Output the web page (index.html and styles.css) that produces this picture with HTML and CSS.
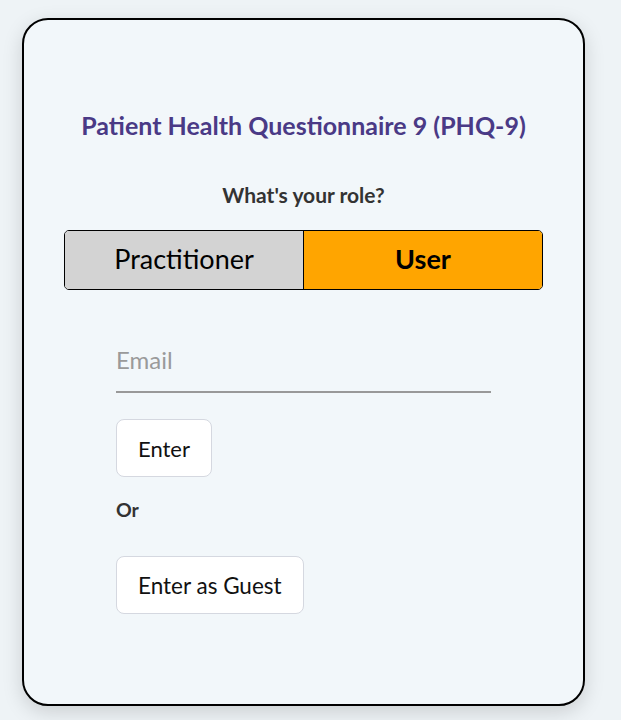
FILE: index.html
```html
<!DOCTYPE html>
<html>
<head>
<meta charset="utf-8">
<link rel="stylesheet" href="styles.css">
</head>
<body>
<div class="card">
  <h1 class="title">Patient Health Questionnaire 9 (PHQ-9)</h1>
  <p class="role">What's your role?</p>
  <div class="toggle">
    <div class="opt opt-off">Practitioner</div>
    <div class="opt opt-on">User</div>
  </div>
  <div class="form">
    <input class="email" type="text" placeholder="Email">
    <button class="btn">Enter</button>
    <p class="or">Or</p>
    <button class="btn btn-guest">Enter as Guest</button>
  </div>
</div>
</body>
</html>
```

FILE: styles.css
```css
html, body {
  margin: 0;
  padding: 0;
}
body {
  background: #eef3f6;
  font-family: Lato, "Open Sans", sans-serif;
  height: 720px;
  overflow: hidden;
}
.card {
  box-sizing: border-box;
  margin: 18px 0 0 22px;
  width: 563px;
  height: 688px;
  border: 2px solid #000;
  border-radius: 26px;
  background: #f2f7fa;
  box-shadow: 0 6px 20px rgba(0, 0, 0, 0.15);
  padding: 0 40px;
}
.title {
  margin: 90px 0 0;
  text-align: center;
  font-size: 25px;
  font-weight: 700;
  color: #4a3a86;
  line-height: 30px;
  white-space: nowrap;
}
.role {
  margin: 42px 0 0;
  text-align: center;
  font-size: 21px;
  font-weight: 700;
  color: #333;
  line-height: 26px;
}
.toggle {
  margin-top: 22px;
  display: flex;
  height: 60px;
  border: 1px solid #000;
  border-radius: 5px;
  overflow: hidden;
  box-sizing: border-box;
}
.opt {
  flex: 1;
  display: flex;
  align-items: center;
  justify-content: center;
  font-size: 27px;
  color: #000;
  padding-bottom: 3px;
}
.opt-off {
  background: #d3d3d3;
  border-right: 1px solid #000;
}
.opt-on {
  background: #ffa500;
  font-weight: 700;
}
.form {
  margin: 40px 0 0 52px;
  display: flex;
  flex-direction: column;
  align-items: flex-start;
}
.email {
  width: 375px;
  box-sizing: content-box;
  border: none;
  border-bottom: 2px solid #999;
  background: transparent;
  font-family: inherit;
  font-size: 24px;
  line-height: 28px;
  height: 28px;
  padding: 16px 0 17px;
  margin: 0;
  outline: none;
  color: #333;
}
.email::placeholder {
  color: #9a9a9a;
}
.btn {
  margin-top: 26px;
  height: 58px;
  padding: 0 21px;
  background: #fff;
  border: 1px solid #d5d8e0;
  border-radius: 8px;
  font-family: inherit;
  font-size: 22px;
  color: #111;
}
.btn-guest {
  font-size: 22.5px;
}
.or {
  margin: 21px 0 0;
  font-size: 19.5px;
  font-weight: 700;
  color: #333;
  line-height: 24px;
}
.or + .btn {
  margin-top: 34px;
}
```
